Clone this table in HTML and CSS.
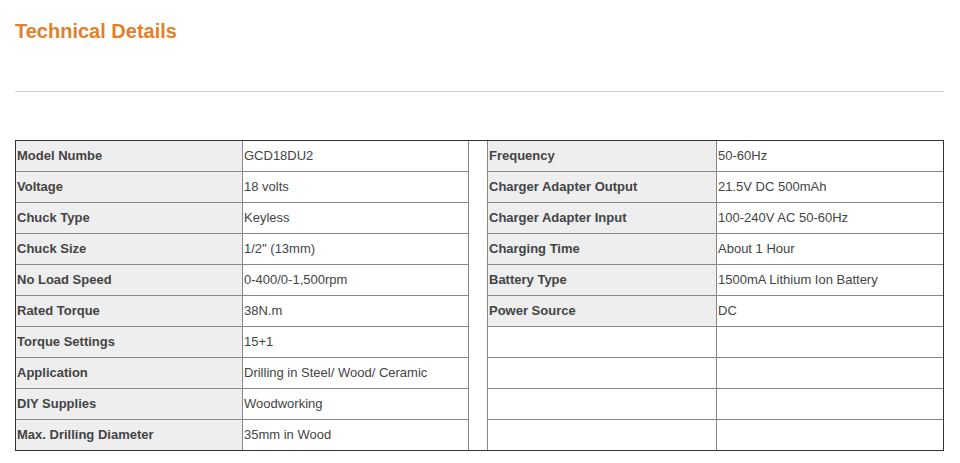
FILE: index.html
```html
<!DOCTYPE html>
<html>
<head>
<meta charset="utf-8">
<link rel="stylesheet" href="styles.css">
</head>
<body>
<div class="page">
  <h2 class="title">Technical Details</h2>
  <div class="rule"></div>
  <div class="specs">
    <table class="spec-table">
      <colgroup>
        <col class="c-label-l">
        <col class="c-value-l">
        <col class="c-gap">
        <col class="c-label-r">
        <col class="c-value-r">
      </colgroup>
      <tbody>
        <tr><td class="lbl">Model Numbe</td><td class="val">GCD18DU2</td><td class="gap"></td><td class="lbl">Frequency</td><td class="val">50-60Hz</td></tr>
        <tr><td class="lbl">Voltage</td><td class="val">18 volts</td><td class="gap"></td><td class="lbl">Charger Adapter Output</td><td class="val">21.5V DC 500mAh</td></tr>
        <tr><td class="lbl">Chuck Type</td><td class="val">Keyless</td><td class="gap"></td><td class="lbl">Charger Adapter Input</td><td class="val">100-240V AC 50-60Hz</td></tr>
        <tr><td class="lbl">Chuck Size</td><td class="val">1/2" (13mm)</td><td class="gap"></td><td class="lbl">Charging Time</td><td class="val">About 1 Hour</td></tr>
        <tr><td class="lbl">No Load Speed</td><td class="val">0-400/0-1,500rpm</td><td class="gap"></td><td class="lbl">Battery Type</td><td class="val">1500mA Lithium Ion Battery</td></tr>
        <tr><td class="lbl">Rated Torque</td><td class="val">38N.m</td><td class="gap"></td><td class="lbl">Power Source</td><td class="val">DC</td></tr>
        <tr><td class="lbl">Torque Settings</td><td class="val">15+1</td><td class="gap"></td><td class="empty"></td><td class="val"></td></tr>
        <tr><td class="lbl">Application</td><td class="val">Drilling in Steel/ Wood/ Ceramic</td><td class="gap"></td><td class="empty"></td><td class="val"></td></tr>
        <tr><td class="lbl">DIY Supplies</td><td class="val">Woodworking</td><td class="gap"></td><td class="empty"></td><td class="val"></td></tr>
        <tr><td class="lbl">Max. Drilling Diameter</td><td class="val">35mm in Wood</td><td class="gap"></td><td class="empty"></td><td class="val"></td></tr>
      </tbody>
    </table>
  </div>
</div>
</body>
</html>
```
FILE: styles.css
```css
* { box-sizing: border-box; }
html, body { margin: 0; padding: 0; background: #fff; }
body { font-family: "Liberation Sans", Arial, sans-serif; color: #444; }
.page { padding: 19px 15px 0 15px; width: 959px; }
.title {
  margin: 0;
  font-size: 20px;
  line-height: 24px;
  font-weight: bold;
  color: #e37f2b;
}
.rule {
  margin-top: 48px;
  height: 1px;
  background: #d0d0d0;
  width: 929px;
}
.specs {
  margin-top: 48px;
  width: 929px;
  border: 1px solid #333;
}
.spec-table {
  width: 927px;
  border-collapse: separate;
  border-spacing: 0;
  table-layout: fixed;
  font-size: 13px;
}
.c-label-l { width: 227px; }
.c-value-l { width: 226px; }
.c-gap { width: 19px; }
.c-label-r { width: 229px; }
.c-value-r { width: 226px; }
.spec-table td {
  height: 31px;
  padding: 0 0 2px 1px;
  border-right: 1px solid #888;
  border-bottom: 1px solid #888;
  white-space: nowrap;
  overflow: hidden;
  vertical-align: middle;
}
.spec-table tr td:last-child { border-right: none; }
.spec-table tr:last-child td { border-bottom: none; height: 30px; }
.spec-table td.gap { border-bottom: none; }
.lbl { background: #eee; font-weight: bold; color: #444; }
.val { background: #fff; color: #444; }
.empty { background: #fff; }
```
